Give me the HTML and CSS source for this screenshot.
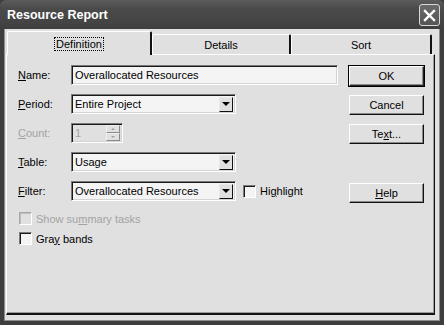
FILE: index.html
```html
<!DOCTYPE html>
<html lang="en">
  <head>
    <meta charset="UTF-8" />
    <meta name="viewport" content="width=device-width, initial-scale=1.0" />
    <title>Resource Report</title>
    <link rel="stylesheet" href="styles.css">
  </head>
  <body>
    <div class="window">
      <div class="titlebar">
        <span class="title">Resource Report</span>
        <span class="close">
          <svg width="13" height="13" viewBox="0 0 13 13">
            <path d="M2 2 L11 11 M11 2 L2 11" stroke="#fff" stroke-width="2.4" stroke-linecap="square" />
          </svg>
        </span>
      </div>

      <div class="client">
        <div class="tabs">
          <div class="tab tab-def active"><span class="focus">Definition</span></div>
          <div class="tab tab-details">Details</div>
          <div class="tab tab-sort">Sort</div>
        </div>

        <div class="panel">
          <div class="fields">
            <div class="row">
              <label class="lbl"><u>N</u>ame:</label>
              <div class="edit name-edit">Overallocated Resources</div>
            </div>
            <div class="row">
              <label class="lbl"><u>P</u>eriod:</label>
              <div class="edit combo">
                <span class="combo-text">Entire Project</span>
                <span class="drop"><i class="arrow"></i></span>
              </div>
            </div>
            <div class="row">
              <label class="lbl disabled"><u>C</u>ount:</label>
              <div class="edit spin disabled">
                <span class="combo-text">1</span>
                <span class="spin-btns">
                  <span class="spin-btn"><i class="up"></i></span>
                  <span class="spin-btn"><i class="down"></i></span>
                </span>
              </div>
            </div>
            <div class="row">
              <label class="lbl"><u>T</u>able:</label>
              <div class="edit combo">
                <span class="combo-text">Usage</span>
                <span class="drop"><i class="arrow"></i></span>
              </div>
            </div>
            <div class="row">
              <label class="lbl"><u>F</u>ilter:</label>
              <div class="edit combo">
                <span class="combo-text">Overallocated Resources</span>
                <span class="drop"><i class="arrow"></i></span>
              </div>
              <label class="check highlight"><span class="box"></span><span>Hi<u>g</u>hlight</span></label>
            </div>

            <label class="check disabled first-check"><span class="box"></span><span>Show su<u>m</u>mary tasks</span></label>
            <label class="check last-check"><span class="box"></span><span>Gra<u>y</u> bands</span></label>
          </div>

          <div class="buttons">
            <button class="btn default">OK</button>
            <button class="btn">Cancel</button>
            <button class="btn">Te<u>x</u>t...</button>
            <button class="btn help"><u>H</u>elp</button>
          </div>
        </div>
      </div>
    </div>
  </body>
</html>
```

FILE: styles.css
```css
body {
  margin: 0;
  font-family: "Liberation Sans", Arial, sans-serif;
  font-size: 11px;
  color: #000;
  background: #3c3c3c;
}
.window {
  width: 444px;
  height: 325px;
  box-sizing: border-box;
  padding: 0 4px 4px 4px;
  background: #3e3e3e;
  display: flex;
  flex-direction: column;
}
.titlebar {
  height: 29px;
  flex: none;
  margin: 0 -4px;
  padding: 0 4px 0 7px;
  display: flex;
  align-items: center;
  justify-content: space-between;
  background: linear-gradient(#5c5c5c, #4a4a4a 30%, #434343 80%, #3e3e3e);
  border-radius: 6px 6px 0 0;
}
.title {
  color: #fff;
  font-weight: bold;
  font-size: 12.5px;
  padding-top: 1px;
}
.close {
  width: 19px;
  height: 20px;
  border: 1px solid #d8d8d8;
  border-radius: 3px;
  background: linear-gradient(#6a6a6a, #555555);
  display: flex;
  align-items: center;
  justify-content: center;
  margin-top: 1px;
}
.client {
  flex: 1;
  background: #e0e0e0;
  box-shadow: inset 1px 0 #8c8c8c, inset -1px 0 #8c8c8c, inset 0 -1px #8c8c8c;
  padding: 2px 5px 6px 2px;
  display: flex;
  flex-direction: column;
}
.tabs {
  height: 23px;
  display: flex;
  align-items: flex-end;
  padding-left: 1px;
  position: relative;
  z-index: 1;
}
.tab {
  height: 20px;
  box-sizing: border-box;
  border-top: 1px solid #fff;
  border-left: 1px solid #fff;
  border-right: 2px solid #111;
  border-radius: 2px 2px 0 0;
  display: flex;
  align-items: center;
  justify-content: center;
  padding-top: 1px;
}
.tab-def {
  width: 145px;
}
.tab-details {
  width: 139px;
}
.tab-sort {
  width: 141px;
}
.tab.active {
  height: 24px;
  margin-bottom: -1px;
  background: #e0e0e0;
  padding-top: 0;
}
.focus {
  outline: 1px dotted #000;
  padding: 0 1px;
}
.panel {
  height: 261px;
  box-sizing: border-box;
  border-top: 1px solid #fff;
  border-left: 1px solid #fff;
  border-right: 1px solid #111;
  border-bottom: 2px solid #111;
  box-shadow: inset -1px 0 #9a9a9a, inset 0 -1px #9a9a9a;
  padding: 10px 0 0 11px;
  display: flex;
  gap: 11px;
}
.fields {
  width: 320px;
  display: flex;
  flex-direction: column;
  gap: 9px;
}
.row {
  height: 20px;
  display: flex;
  align-items: center;
}
.lbl {
  width: 53px;
}
.disabled {
  color: #a3a3a3;
}
.edit {
  height: 20px;
  box-sizing: border-box;
  border: 1px solid;
  border-color: #7a7a7a #fff #fff #7a7a7a;
  box-shadow: inset 1px 1px #1a1a1a, inset -1px -1px #d4d4d4;
  background: #f4f4f4;
  display: flex;
  align-items: center;
  padding-left: 3px;
}
.name-edit {
  width: 267px;
}
.combo {
  width: 165px;
  padding-right: 2px;
}
.combo-text {
  flex: 1;
}
.drop {
  width: 14px;
  height: 15px;
  box-sizing: border-box;
  border: 1px solid;
  border-color: #e8e8e8 #111 #111 #e8e8e8;
  background: #e0e0e0;
  display: flex;
  align-items: center;
  justify-content: center;
}
.arrow {
  width: 0;
  height: 0;
  border-left: 4px solid transparent;
  border-right: 4px solid transparent;
  border-top: 4px solid #000;
}
.spin {
  width: 52px;
  padding-right: 2px;
  background: #e0e0e0;
}
.spin-btns {
  width: 14px;
  height: 16px;
  display: flex;
  flex-direction: column;
}
.spin-btn {
  flex: 1;
  box-sizing: border-box;
  border: 1px solid;
  border-color: #f0f0f0 #8a8a8a #8a8a8a #f0f0f0;
  background: #e0e0e0;
  display: flex;
  align-items: center;
  justify-content: center;
}
.up,
.down {
  width: 0;
  height: 0;
  border-left: 2px solid transparent;
  border-right: 2px solid transparent;
}
.up {
  border-bottom: 2px solid #a0a0a0;
}
.down {
  border-top: 2px solid #a0a0a0;
}
.check {
  display: flex;
  align-items: center;
  height: 13px;
}
.box {
  width: 13px;
  height: 13px;
  box-sizing: border-box;
  border: 1px solid;
  border-color: #7a7a7a #fff #fff #7a7a7a;
  box-shadow: inset 1px 1px #1a1a1a;
  background: #f4f4f4;
  margin-right: 4px;
}
.check.disabled .box {
  border-color: #a8a8a8 #fff #fff #a8a8a8;
  box-shadow: inset 1px 1px #bdbdbd;
  background: #e0e0e0;
}
.highlight {
  margin-left: 7px;
}
.first-check {
  margin-left: 1px;
  margin-top: 2px;
}
.last-check {
  margin-left: 1px;
  margin-top: -2px;
}
.buttons {
  width: 75px;
  display: flex;
  flex-direction: column;
  gap: 9px;
  padding-top: 1px;
}
.btn {
  height: 20px;
  width: 75px;
  font-family: "Liberation Sans", Arial, sans-serif;
  font-size: 11px;
  background: #e0e0e0;
  border: 1px solid;
  border-color: #fff #111 #111 #fff;
  box-shadow: inset -1px -1px #8a8a8a;
  padding: 0;
  color: #000;
}
.btn.default {
  outline: 1px solid #000;
  outline-offset: 0;
  border-color: #fff #222 #222 #fff;
}
.help {
  margin-top: 30px;
}
```
